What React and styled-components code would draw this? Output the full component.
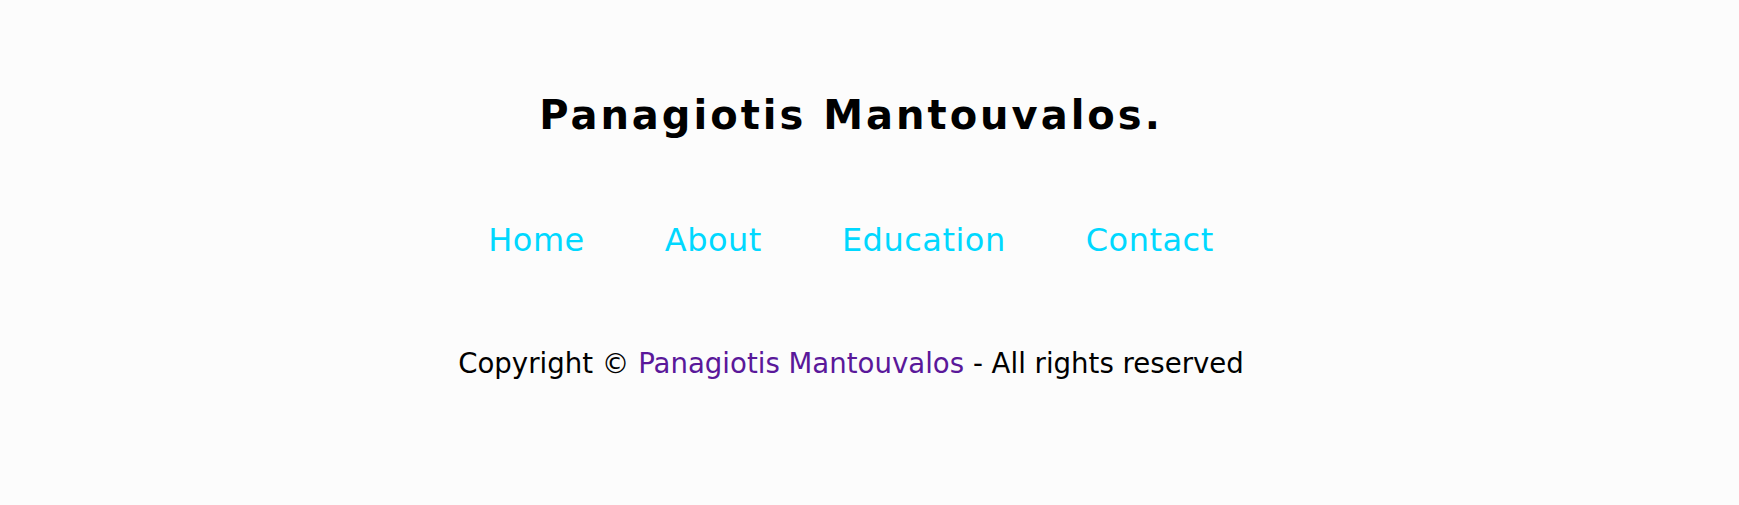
import styled, { createGlobalStyle } from 'styled-components'

const GlobalStyle = createGlobalStyle`
  html, body {
    margin: 0;
    padding: 0;
    background-color: #fcfcfc;
  }

  body {
    font-family: "DejaVu Sans", "Noto Sans", sans-serif;
    color: #000;
  }
`

const Footer = styled.footer`
  display: flex;
  flex-direction: column;
  align-items: center;
  height: 505px;
  box-sizing: border-box;
  padding: 89px 37px 0 0;
`

const Title = styled.h2`
  margin: 0;
  font-size: 40px;
  font-weight: 700;
  line-height: 52px;
  letter-spacing: 3px;
`

const NavList = styled.ul`
  display: flex;
  gap: 80px;
  list-style: none;
  margin: 79px 0 0;
  padding: 0;
`

const NavLink = styled.a`
  display: block;
  font-size: 32px;
  line-height: 40px;
  letter-spacing: 0.5px;
  color: #00d8ff;
  text-decoration: none;
`

const Copyright = styled.p`
  margin: 86px 0 0;
  font-size: 27.6px;
  line-height: 36px;
`

const Owner = styled.span`
  color: #5a189a;
`

const links = ['Home', 'About', 'Education', 'Contact']

export default function App() {
  return (
    <>
      <GlobalStyle />
      <Footer>
        <Title>Panagiotis Mantouvalos.</Title>
        <NavList>
          {links.map(link => (
            <li key={link}>
              <NavLink href={'#' + link.toLowerCase()}>{link}</NavLink>
            </li>
          ))}
        </NavList>
        <Copyright>
          Copyright © <Owner>Panagiotis Mantouvalos</Owner> - All rights reserved
        </Copyright>
      </Footer>
    </>
  )
}
